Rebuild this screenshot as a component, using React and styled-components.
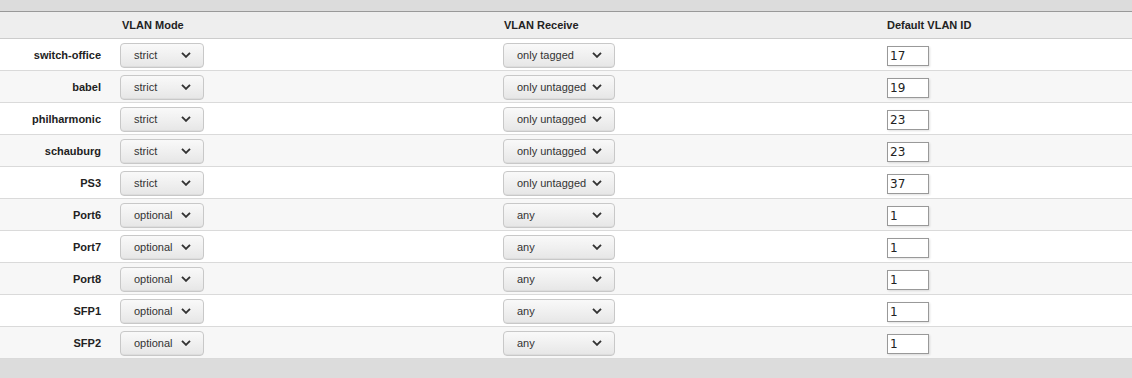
import React from 'react'
import styled, { createGlobalStyle } from 'styled-components'

const GlobalStyle = createGlobalStyle`
	body {
		margin: 0;
		background-color: #dcdcdc;
		font-family: "Liberation Sans", Arial, sans-serif;
	}
`

const Page = styled.div`
	width: 1132px;
	height: 378px;
	background-color: #dcdcdc;
	padding-top: 11px;
	box-sizing: border-box;
`

const Table = styled.div`
	display: grid;
	grid-template-columns: 110px 383px 384px 1fr;
	border-top: 1px solid #999;
`

const HeadCell = styled.div`
	height: 26px;
	display: flex;
	align-items: center;
	padding-left: ${(p) => p.$pad || 10}px;
	background-color: #eeeeee;
	border-bottom: 1px solid #ccc;
	font-size: 11px;
	font-weight: bold;
	color: #222;
`

const Cell = styled.div`
	height: 31px;
	display: flex;
	align-items: center;
	justify-content: ${(p) => (p.$right ? 'flex-end' : 'flex-start')};
	padding: ${(p) => (p.$right ? '0 9px 0 0' : '0 0 0 10px')};
	background-color: ${(p) => (p.$odd ? '#f7f7f7' : '#fff')};
	border-bottom: 1px solid #dadada;
	font-size: 11px;
	color: #222;
`

const Label = styled.span`
	font-weight: bold;
`

const Select = styled.div`
	box-sizing: border-box;
	width: ${(p) => p.$width}px;
	height: 25px;
	margin-top: 1px;
	display: flex;
	align-items: center;
	justify-content: space-between;
	padding: 0 12px 0 13px;
	border: 1px solid #c8c8c8;
	border-radius: 4px;
	background: linear-gradient(#f9f9f9, #eeeeee 60%, #e6e6e6);
	box-shadow: inset 0 -3px 0 -2px rgba(0, 0, 0, 0.04);
	color: #333;
	font-size: 11px;
`

const Input = styled.div`
	box-sizing: border-box;
	width: 42px;
	height: 20px;
	margin-top: 3px;
	display: flex;
	align-items: center;
	padding-left: 2px;
	border: 1px solid #999;
	background-color: #fff;
	box-shadow: 1px 1px 2px rgba(0, 0, 0, 0.12);
	font-family: "DejaVu Sans", sans-serif;
	font-size: 12px;
	color: #222;
`

const Chevron = () => (
	<svg width='10' height='6' viewBox='0 0 10 6'>
		<polyline points='1,0.8 5,4.8 9,0.8' fill='none' stroke='#333' strokeWidth='1.9' />
	</svg>
)

const ports = [
	{ name: 'switch-office', mode: 'strict', receive: 'only tagged', id: '17' },
	{ name: 'babel', mode: 'strict', receive: 'only untagged', id: '19' },
	{ name: 'philharmonic', mode: 'strict', receive: 'only untagged', id: '23' },
	{ name: 'schauburg', mode: 'strict', receive: 'only untagged', id: '23' },
	{ name: 'PS3', mode: 'strict', receive: 'only untagged', id: '37' },
	{ name: 'Port6', mode: 'optional', receive: 'any', id: '1' },
	{ name: 'Port7', mode: 'optional', receive: 'any', id: '1' },
	{ name: 'Port8', mode: 'optional', receive: 'any', id: '1' },
	{ name: 'SFP1', mode: 'optional', receive: 'any', id: '1' },
	{ name: 'SFP2', mode: 'optional', receive: 'any', id: '1' },
]

const App = () => {
	return (
		<Page>
			<GlobalStyle />
			<Table>
				<HeadCell />
				<HeadCell $pad={12}>VLAN Mode</HeadCell>
				<HeadCell $pad={11}>VLAN Receive</HeadCell>
				<HeadCell>Default VLAN ID</HeadCell>
				{ports.map((port, i) => (
					<React.Fragment key={port.name}>
						<Cell $right $odd={i % 2 === 1}>
							<Label>{port.name}</Label>
						</Cell>
						<Cell $odd={i % 2 === 1}>
							<Select $width={84}>
								{port.mode}
								<Chevron />
							</Select>
						</Cell>
						<Cell $odd={i % 2 === 1}>
							<Select $width={112}>
								{port.receive}
								<Chevron />
							</Select>
						</Cell>
						<Cell $odd={i % 2 === 1}>
							<Input>{port.id}</Input>
						</Cell>
					</React.Fragment>
				))}
			</Table>
		</Page>
	)
}

export default App
